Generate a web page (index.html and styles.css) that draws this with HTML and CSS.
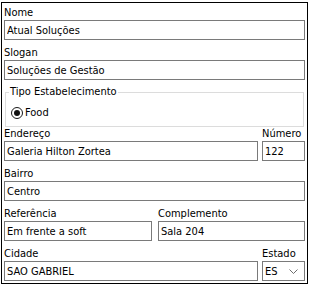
FILE: index.html
```html
<!DOCTYPE html>
<html lang="pt-BR">
<head>
  <meta charset="UTF-8">
  <title>Cadastro</title>
  <link rel="stylesheet" href="styles.css">
</head>
<body>
  <div class="form">
    <div class="field first">
      <label>Nome</label>
      <input type="text" value="Atual Soluções">
    </div>
    <div class="field">
      <label>Slogan</label>
      <input type="text" value="Soluções de Gestão">
    </div>
    <fieldset class="group">
      <legend>Tipo Estabelecimento</legend>
      <div class="radio">
        <span class="dot"></span>
        <span>Food</span>
      </div>
    </fieldset>
    <div class="row row-num">
      <div class="field tight">
        <label>Endereço</label>
        <input type="text" value="Galeria Hilton Zortea">
      </div>
      <div class="field tight">
        <label>Número</label>
        <input type="text" value="122">
      </div>
    </div>
    <div class="field">
      <label>Bairro</label>
      <input type="text" value="Centro">
    </div>
    <div class="row row-half">
      <div class="field">
        <label>Referência</label>
        <input type="text" value="Em frente a soft">
      </div>
      <div class="field">
        <label>Complemento</label>
        <input type="text" value="Sala 204">
      </div>
    </div>
    <div class="row row-num">
      <div class="field">
        <label>Cidade</label>
        <input type="text" value="SAO GABRIEL">
      </div>
      <div class="field">
        <label>Estado</label>
        <div class="select">
          <span>ES</span>
          <svg width="9" height="5" viewBox="0 0 9 5"><path d="M0.5 0.5 L4.5 4.5 L8.5 0.5" fill="none" stroke="#6d6d6d" stroke-width="1"/></svg>
        </div>
      </div>
    </div>
  </div>
</body>
</html>
```

FILE: styles.css
```css
body {
  margin: 2px 0 0 1px;
  background-color: white;
  font-family: "DejaVu Sans Condensed", "Liberation Sans", sans-serif;
  font-size: 11px;
  color: #000;
}
.form {
  width: 301px;
  height: 280px;
  border: 1px solid black;
  padding: 0 2px;
}
.field label {
  display: block;
  line-height: 14px;
  padding-top: 6px;
}
.field.first label {
  padding-top: 3px;
}
.field.tight label {
  padding-top: 0;
}
.field input,
.select {
  display: block;
  box-sizing: border-box;
  width: 100%;
  height: 20px;
  margin: 0;
  border: 1px solid #7a7a7a;
  padding: 0 2px;
  font-family: inherit;
  font-size: 11px;
  color: #000;
  background-color: white;
  outline: none;
}
.select {
  display: flex;
  align-items: center;
  justify-content: space-between;
  padding: 0 6px 0 2px;
}
.group {
  margin: 5px 1px 0 1px;
  padding: 0 3px 3px 3px;
  border: 1px solid #dcdcdc;
  height: 42px;
  box-sizing: border-box;
}
.group legend {
  padding: 0 1px;
  line-height: 14px;
}
.radio {
  display: flex;
  align-items: center;
  gap: 2px;
  margin: 7px 0 0 2px;
  line-height: 14px;
}
.dot {
  width: 10px;
  height: 10px;
  border: 1px solid #1a1a1a;
  border-radius: 50%;
  display: flex;
  align-items: center;
  justify-content: center;
}
.dot::after {
  content: "";
  width: 6px;
  height: 6px;
  border-radius: 50%;
  background-color: #111;
}
.row {
  display: grid;
}
.row-num {
  grid-template-columns: 1fr 43px;
  gap: 4px;
}
.row-half {
  grid-template-columns: 148px 1fr;
  gap: 6px;
}
```
